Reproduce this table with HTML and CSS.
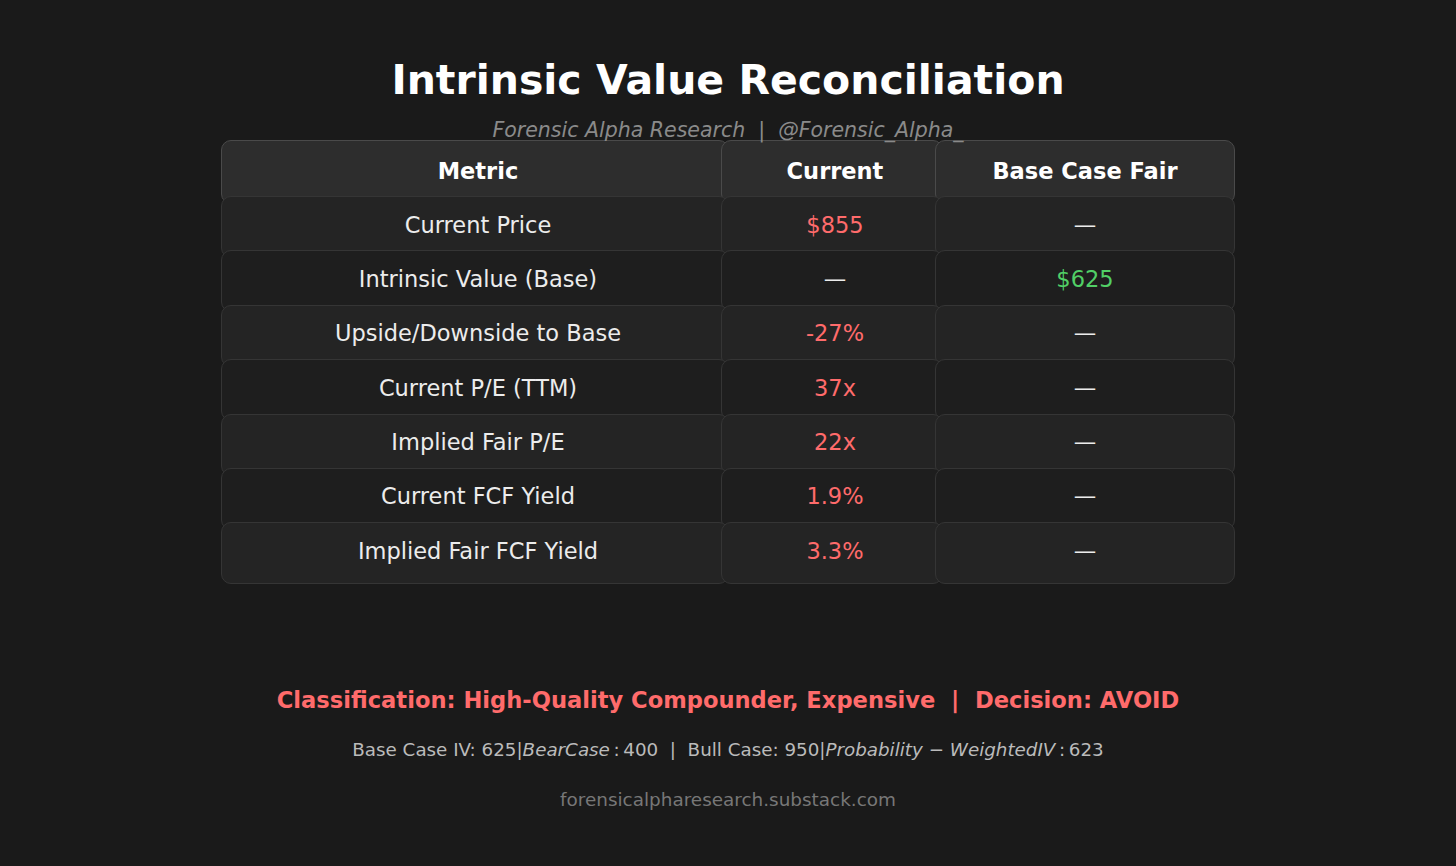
FILE: index.html
```html
<!DOCTYPE html>
<html>
<head>
<meta charset="utf-8">
<link rel="stylesheet" href="styles.css">
</head>
<body>
<div class="page">
  <h1 class="title">Intrinsic Value Reconciliation</h1>
  <div class="subtitle">Forensic Alpha Research &nbsp;|&nbsp; @Forensic_Alpha_</div>
  <div class="table">
    <div class="row head">
      <div class="cell c1">Metric</div>
      <div class="cell c2">Current</div>
      <div class="cell c3">Base Case Fair</div>
    </div>
    <div class="row odd">
      <div class="cell c1">Current Price</div>
      <div class="cell c2 red">$855</div>
      <div class="cell c3">—</div>
    </div>
    <div class="row even">
      <div class="cell c1">Intrinsic Value (Base)</div>
      <div class="cell c2">—</div>
      <div class="cell c3 green">$625</div>
    </div>
    <div class="row odd">
      <div class="cell c1">Upside/Downside to Base</div>
      <div class="cell c2 red">-27%</div>
      <div class="cell c3">—</div>
    </div>
    <div class="row even">
      <div class="cell c1">Current P/E (TTM)</div>
      <div class="cell c2 red">37x</div>
      <div class="cell c3">—</div>
    </div>
    <div class="row odd">
      <div class="cell c1">Implied Fair P/E</div>
      <div class="cell c2 red">22x</div>
      <div class="cell c3">—</div>
    </div>
    <div class="row even">
      <div class="cell c1">Current FCF Yield</div>
      <div class="cell c2 red">1.9%</div>
      <div class="cell c3">—</div>
    </div>
    <div class="row odd">
      <div class="cell c1">Implied Fair FCF Yield</div>
      <div class="cell c2 red">3.3%</div>
      <div class="cell c3">—</div>
    </div>
  </div>
  <div class="classification">Classification: High-Quality Compounder, Expensive &nbsp;|&nbsp; Decision: AVOID</div>
  <div class="cases">Base Case IV: 625|<i>BearCase</i>&thinsp;:&thinsp;400 &nbsp;|&nbsp; Bull Case: 950|<i>Probability</i> − <i>WeightedIV</i>&thinsp;:&thinsp;623</div>
  <div class="url">forensicalpharesearch.substack.com</div>
</div>
</body>
</html>
```

FILE: styles.css
```css
html, body {
  margin: 0;
  padding: 0;
  background: #1a1a1a;
}
body {
  font-family: "DejaVu Sans", "Liberation Sans", sans-serif;
  color: #e8e8e8;
}
.page {
  width: 1456px;
  height: 866px;
  display: flex;
  flex-direction: column;
  align-items: center;
  box-sizing: border-box;
  padding-top: 56px;
}
.title {
  margin: 0;
  font-size: 41px;
  line-height: 48px;
  font-weight: bold;
  color: #ffffff;
}
.subtitle {
  position: relative;
  z-index: 1;
  margin-top: 14px;
  font-size: 20.5px;
  line-height: 24px;
  font-style: italic;
  color: #8a8a8a;
  height: 22px;
}
.table {
  display: flex;
  flex-direction: column;
  width: 1014px;
  height: 444px;
}
.row {
  display: flex;
  height: 54.4px;
  flex: none;
}
.row.head {
  height: 56px;
}
.cell {
  height: 62px;
  box-sizing: border-box;
  border-radius: 10px;
  border: 1.5px solid #353535;
  display: flex;
  align-items: center;
  justify-content: center;
  padding-bottom: 5px;
  font-size: 22.5px;
  color: #ececec;
  flex: none;
}
.c1 { width: 508px; margin-right: -8px; padding-left: 6px; }
.c2 { width: 222px; margin-right: -8px; padding-left: 6px; }
.c3 { width: 300px; }
.head .cell {
  height: 64px;
  padding-bottom: 3px;
  background: #2d2d2d;
  border-color: #4a4a4a;
  font-weight: bold;
  color: #ffffff;
}
.odd .cell { background: #242424; }
.even .cell { background: #1e1e1e; }
.red { color: #ff6b6b !important; }
.green { color: #51cf66 !important; }
.classification {
  margin-top: 102px;
  font-size: 22.6px;
  line-height: 28px;
  font-weight: bold;
  color: #ff6b6b;
}
.cases {
  margin-top: 25px;
  font-size: 18.3px;
  line-height: 22px;
  color: #bbbbbb;
}
.url {
  margin-top: 28px;
  font-size: 18.4px;
  line-height: 22px;
  color: #777777;
}
```
